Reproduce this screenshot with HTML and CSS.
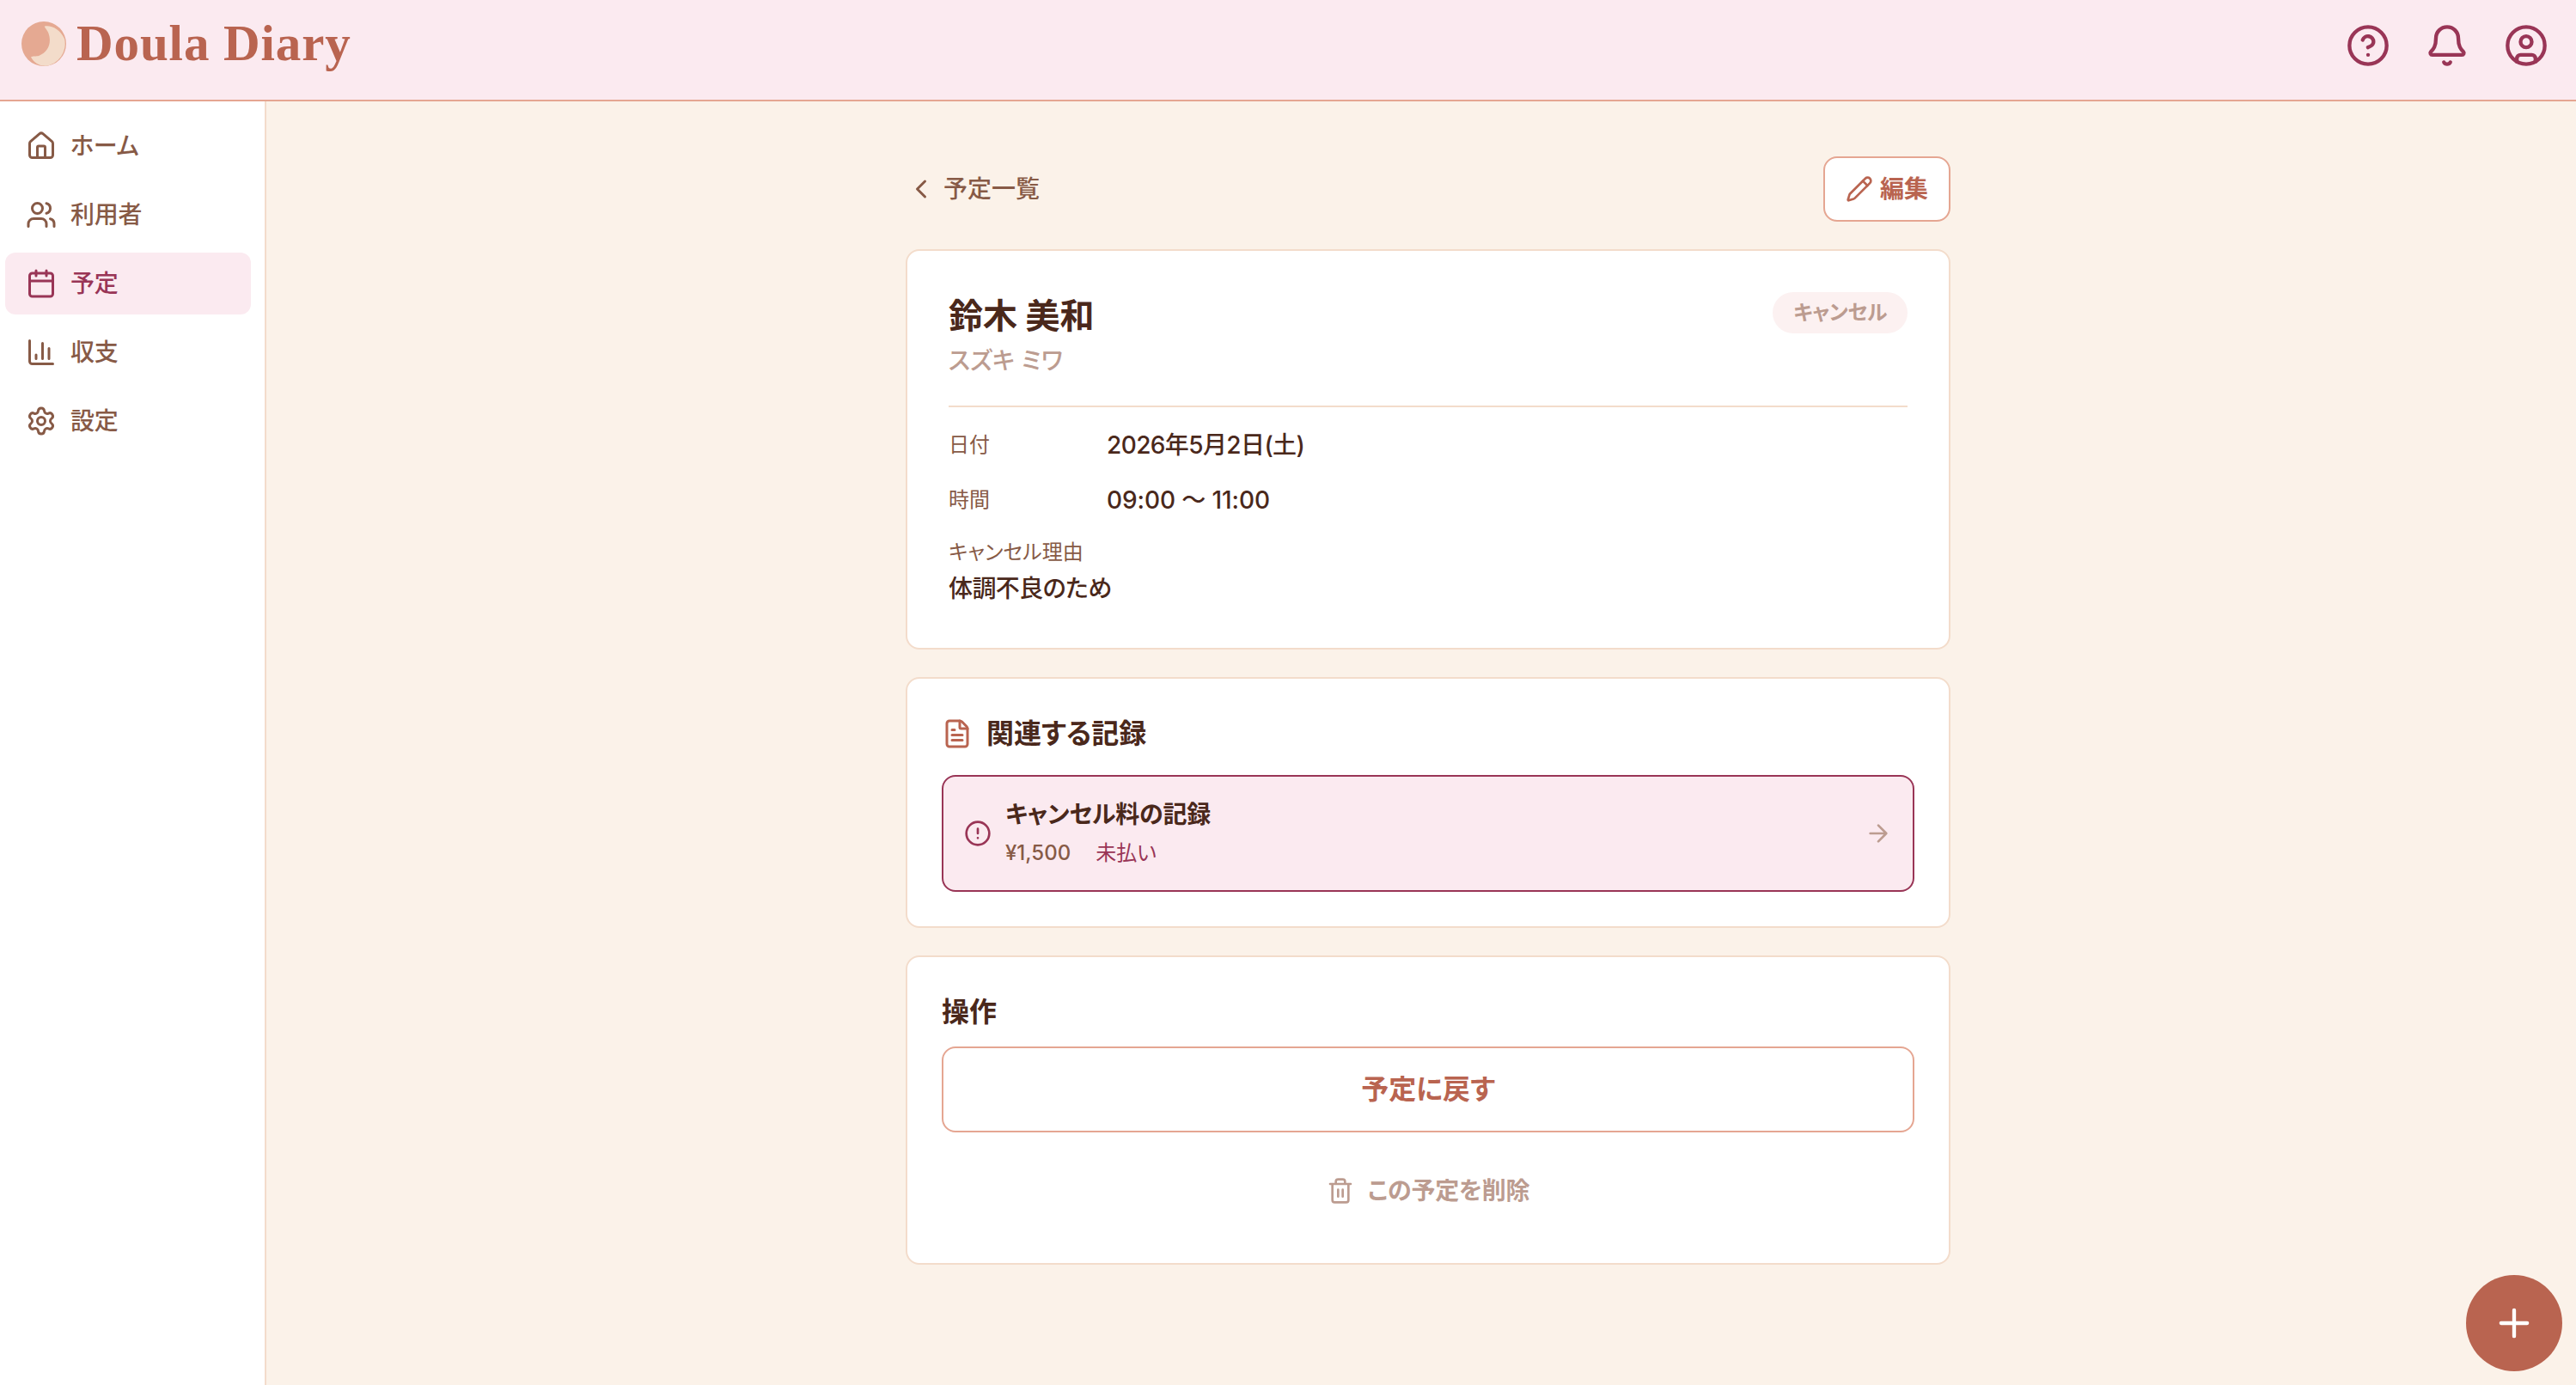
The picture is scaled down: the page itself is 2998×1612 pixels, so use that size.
FILE: index.html
```
<!DOCTYPE html>
<html lang="ja">
<head>
  <meta charset="UTF-8">
  <meta name="viewport" content="width=device-width, initial-scale=1">
  <title>Doula Diary</title>
  <link rel="stylesheet" href="styles.css">
</head>
<body>
  <header class="header">
    <a class="logo">
      <svg class="logo-mark" viewBox="0 0 156 156">
        <circle cx="78" cy="78" r="78" fill="#e5a992"/>
        <path d="M80 17C103 12 134 26 150 60A78 78 0 0 1 84 155.500C60 155 42 142 33 124C40 119 50 123 62 119C90 108 104 80 97 50C93 32 87 30 80 17Z" fill="#f3dcca"/>
      </svg>
      <span class="logo-text">Doula Diary</span>
    </a>
    <div class="header-actions">
      <svg class="icon icon-lg" viewBox="0 0 24 24"><circle cx="12" cy="12" r="10"/><path d="M9.090 9a3 3 0 0 1 5.830 1c0 2-3 3-3 3"/><path d="M12 17h.01"/></svg>
      <svg class="icon icon-lg" viewBox="0 0 24 24"><path d="M10.268 21a2 2 0 0 0 3.464 0"/><path d="M3.262 15.326A1 1 0 0 0 4 17h16a1 1 0 0 0 .74-1.673C19.410 13.956 18 12.499 18 8A6 6 0 0 0 6 8c0 4.499-1.411 5.956-2.738 7.326"/></svg>
      <svg class="icon icon-lg" viewBox="0 0 24 24"><circle cx="12" cy="12" r="10"/><circle cx="12" cy="10" r="3"/><path d="M7 20.662V19a2 2 0 0 1 2-2h6a2 2 0 0 1 2 2v1.662"/></svg>
    </div>
  </header>

  <div class="layout">
    <nav class="sidebar">
      <a class="nav-item">
        <svg class="icon icon-md" viewBox="0 0 24 24"><path d="M15 21v-8a1 1 0 0 0-1-1h-4a1 1 0 0 0-1 1v8"/><path d="M3 10a2 2 0 0 1 .709-1.528l7-5.999a2 2 0 0 1 2.582 0l7 5.999A2 2 0 0 1 21 10v9a2 2 0 0 1-2 2H5a2 2 0 0 1-2-2z"/></svg>
        <span>ホーム</span>
      </a>
      <a class="nav-item">
        <svg class="icon icon-md" viewBox="0 0 24 24"><path d="M16 21v-2a4 4 0 0 0-4-4H6a4 4 0 0 0-4 4v2"/><circle cx="9" cy="7" r="4"/><path d="M22 21v-2a4 4 0 0 0-3-3.870"/><path d="M16 3.130a4 4 0 0 1 0 7.750"/></svg>
        <span>利用者</span>
      </a>
      <a class="nav-item active">
        <svg class="icon icon-md" viewBox="0 0 24 24"><path d="M8 2v4M16 2v4M3 10h18"/><rect x="3" y="4" width="18" height="18" rx="2"/></svg>
        <span>予定</span>
      </a>
      <a class="nav-item">
        <svg class="icon icon-md" viewBox="0 0 24 24"><path d="M3 3v16a2 2 0 0 0 2 2h16"/><path d="M18 17V9M13 17V5M8 17v-3"/></svg>
        <span>収支</span>
      </a>
      <a class="nav-item">
        <svg class="icon icon-md" viewBox="0 0 24 24"><path d="M9.671 4.136a2.340 2.340 0 0 1 4.659 0 2.340 2.340 0 0 0 3.319 1.915 2.340 2.340 0 0 1 2.330 4.033 2.340 2.340 0 0 0 0 3.831 2.340 2.340 0 0 1-2.330 4.033 2.340 2.340 0 0 0-3.319 1.915 2.340 2.340 0 0 1-4.659 0 2.340 2.340 0 0 0-3.320-1.915 2.340 2.340 0 0 1-2.330-4.033 2.340 2.340 0 0 0 0-3.831A2.340 2.340 0 0 1 6.350 6.051a2.340 2.340 0 0 0 3.319-1.915"/><circle cx="12" cy="12" r="3"/></svg>
        <span>設定</span>
      </a>
    </nav>

    <main class="main">
      <div class="container">
        <div class="page-bar">
          <a class="back-link">
            <svg class="icon icon-md" viewBox="0 0 24 24"><path d="m15 18-6-6 6-6"/></svg>
            <span>予定一覧</span>
          </a>
          <button class="btn-edit">
            <svg class="icon icon-sm" viewBox="0 0 24 24"><path d="M21.174 6.812a1 1 0 0 0-3.986-3.987L3.842 16.174a2 2 0 0 0-.5.830l-1.321 4.352a.5.5 0 0 0 .623.622l4.353-1.320a2 2 0 0 0 .830-.497z"/><path d="m15 5 4 4"/></svg>
            <span>編集</span>
          </button>
        </div>

        <section class="card card-detail">
          <div class="client">
            <div>
              <h1 class="client-name">鈴木 美和</h1>
              <p class="client-kana">スズキ ミワ</p>
            </div>
            <span class="badge">キャンセル</span>
          </div>
          <dl class="details">
            <div class="row">
              <dt>日付</dt>
              <dd>2026年5月2日(土)</dd>
            </div>
            <div class="row">
              <dt>時間</dt>
              <dd class="time">09:00 〜 11:00</dd>
            </div>
            <div class="reason">
              <dt>キャンセル理由</dt>
              <dd>体調不良のため</dd>
            </div>
          </dl>
        </section>

        <section class="card">
          <h2 class="card-title card-title-icon">
            <svg class="icon icon-md" viewBox="0 0 24 24"><path d="M6 22a2 2 0 0 1-2-2V4a2 2 0 0 1 2-2h8a2.400 2.400 0 0 1 1.704.706l3.588 3.588A2.400 2.400 0 0 1 20 8v12a2 2 0 0 1-2 2z"/><path d="M14 2v5a1 1 0 0 0 1 1h5"/><path d="M10 9H8M16 13H8M16 17H8"/></svg>
            <span>関連する記録</span>
          </h2>
          <a class="record">
            <svg class="icon icon-sm" viewBox="0 0 24 24"><circle cx="12" cy="12" r="10"/><path d="M12 8v4M12 16h.01"/></svg>
            <div class="record-body">
              <p class="record-title">キャンセル料の記録</p>
              <p class="record-meta"><span class="amount">¥1,500</span><span class="unpaid">未払い</span></p>
            </div>
            <svg class="icon icon-sm record-arrow" viewBox="0 0 24 24"><path d="M5 12h14M12 5l7 7-7 7"/></svg>
          </a>
        </section>

        <section class="card">
          <h2 class="card-title">操作</h2>
          <button class="btn-restore">予定に戻す</button>
          <button class="btn-delete">
            <svg class="icon icon-sm" viewBox="0 0 24 24"><path d="M3 6h18M19 6v14a2 2 0 0 1-2 2H7a2 2 0 0 1-2-2V6M8 6V4a2 2 0 0 1 2-2h4a2 2 0 0 1 2 2v2M10 11v6M14 11v6"/></svg>
            <span>この予定を削除</span>
          </button>
        </section>
      </div>
    </main>
  </div>

  <button class="fab">
    <svg class="icon icon-lg" viewBox="0 0 24 24"><path d="M5 12h14M12 5v14"/></svg>
  </button>
</body>
</html>
```

FILE: styles.css
```
:root {
  --wine: #993556;
  --pink: #fbeaf0;
  --terracotta: #b96450;
  --salmon: #e5a692;
  --peach: #f3dccb;
  --cream: #fbf2e9;
  --brown: #4a281b;
  --brown-mid: #875a46;
  --brown-light: #bc9c90;
}

* { margin: 0; padding: 0; box-sizing: border-box; }

body {
  min-height: 100vh;
  display: flex;
  flex-direction: column;
  background: var(--cream);
  color: var(--brown);
  font-family: Inter, "Noto Sans CJK JP", sans-serif;
  font-size: 28px;
  line-height: 40px;
  font-feature-settings: "palt";
}

button { font: inherit; font-feature-settings: inherit; cursor: pointer; }

.icon {
  flex: none;
  fill: none;
  stroke: currentColor;
  stroke-width: 2;
  stroke-linecap: round;
  stroke-linejoin: round;
}
.icon-sm { width: 32px; height: 32px; }
.icon-md { width: 36px; height: 36px; }
.icon-lg { width: 52px; height: 52px; }

/* Header */
.header {
  height: 118px;
  padding: 0 32px 10px 25px;
  display: flex;
  align-items: center;
  justify-content: space-between;
  background: var(--pink);
  border-bottom: 2px solid var(--salmon);
}
.logo { display: flex; align-items: center; gap: 12px; }
.logo-mark { width: 52px; height: 52px; margin-bottom: 5px; }
.logo-text {
  font-family: "Liberation Serif", serif;
  font-size: 59px;
  font-weight: 700;
  line-height: 64px;
  letter-spacing: 0.9px;
  margin-bottom: 7px;
  color: var(--terracotta);
}
.header-actions { display: flex; gap: 40px; color: var(--wine); }

/* Sidebar */
.layout { flex: 1; display: flex; }
.sidebar {
  width: 310px;
  padding: 16px 16px 16px 6px;
  display: flex;
  flex-direction: column;
  gap: 8px;
  background: #fff;
  border-right: 2px solid var(--peach);
}
.nav-item {
  height: 72px;
  padding: 0 24px;
  display: flex;
  align-items: center;
  gap: 16px;
  border-radius: 12px;
  color: var(--brown-mid);
  font-weight: 500;
  letter-spacing: -0.2px;
}
.nav-item.active { background: var(--pink); color: var(--wine); }

/* Page */
.main { flex: 1; padding: 64px 0 64px 16px; }
.container {
  width: 1216px;
  margin: 0 auto;
  display: flex;
  flex-direction: column;
  gap: 32px;
}
.page-bar { display: flex; align-items: center; justify-content: space-between; }
.back-link { display: flex; align-items: center; gap: 8px; color: var(--brown-mid); font-weight: 500; }
.btn-edit {
  height: 76px;
  padding: 0 24px;
  display: flex;
  align-items: center;
  gap: 8px;
  background: #fff;
  border: 2px solid var(--salmon);
  border-radius: 16px;
  color: var(--terracotta);
  font-weight: 700;
}

.card { padding: 40px; background: #fff; border: 2px solid var(--peach); border-radius: 16px; }
.card-detail { padding: 48px; }
.client {
  display: flex;
  align-items: flex-start;
  justify-content: space-between;
  padding-bottom: 30px;
  border-bottom: 2px solid var(--peach);
}
.client-name { font-size: 40px; line-height: 56px; font-weight: 700; }
.client-kana { margin-top: 2px; line-height: 44px; color: var(--brown-light); font-weight: 500; }
.badge {
  padding: 0 24px;
  border-radius: 24px;
  background: #fcf1f1;
  color: var(--brown-light);
  font-size: 24px;
  line-height: 48px;
  font-weight: 700;
  letter-spacing: -0.4px;
}

.details { padding-top: 24px; }
.details dt { font-size: 24px; color: var(--brown-mid); }
.details dd { font-weight: 500; letter-spacing: -0.6px; }
.details .time { letter-spacing: -0.1px; }
.row { display: flex; margin-bottom: 24px; }
.row dt { width: 184px; }
.reason { margin-top: -3px; }
.reason dd { line-height: 45px; margin-bottom: -2px; }

.card-title { font-size: 32px; line-height: 48px; font-weight: 700; }
.card-title-icon { display: flex; align-items: center; gap: 16px; margin-bottom: 24px; }
.card-title-icon .icon { color: var(--terracotta); }

.record {
  padding: 24px;
  display: flex;
  align-items: center;
  gap: 16px;
  background: var(--pink);
  border: 2px solid var(--wine);
  border-radius: 16px;
  color: var(--wine);
}
.record-body { flex: 1; }
.record-title { color: var(--brown); font-weight: 700; letter-spacing: -0.2px; }
.record-meta { display: flex; gap: 29px; margin: 5px 0 -1px; font-size: 24px; color: var(--brown-mid); }
.amount { font-weight: 500; }
.unpaid { color: var(--wine); }
.record-arrow { color: var(--brown-light); }

.btn-restore {
  width: 100%;
  height: 100px;
  margin-top: 16px;
  display: block;
  background: #fff;
  border: 2px solid var(--salmon);
  border-radius: 16px;
  color: var(--terracotta);
  font-size: 32px;
  font-weight: 700;
}
.btn-delete {
  width: 100%;
  height: 88px;
  margin-top: 24px;
  display: flex;
  align-items: center;
  justify-content: center;
  gap: 16px;
  background: none;
  border: none;
  color: var(--brown-light);
  font-weight: 700;
  letter-spacing: -0.2px;
}

.fab {
  position: fixed;
  right: 16px;
  bottom: 16px;
  width: 112px;
  height: 112px;
  display: flex;
  align-items: center;
  justify-content: center;
  background: var(--terracotta);
  border: none;
  border-radius: 50%;
  color: #fff;
}
```
